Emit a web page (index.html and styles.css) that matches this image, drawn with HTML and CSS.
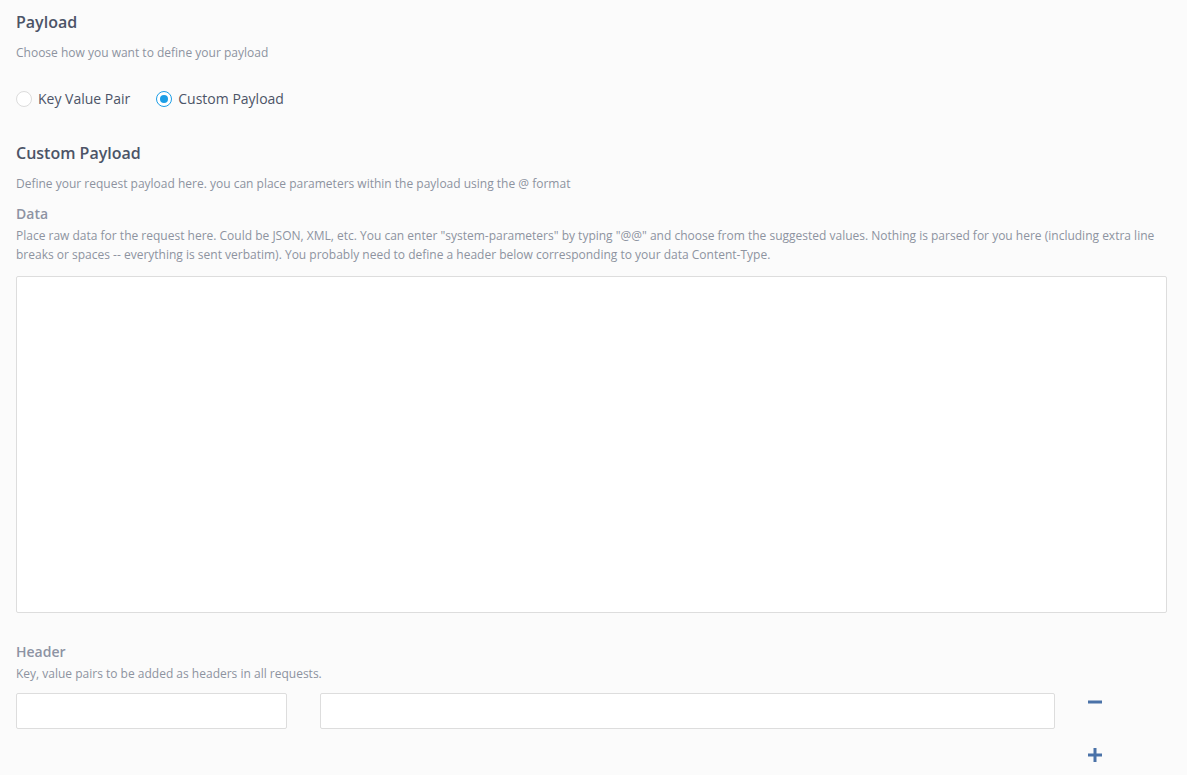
FILE: index.html
```html
<!DOCTYPE html>
<html lang="en">
<head>
    <meta charset="UTF-8">
    <meta name="viewport" content="width=device-width, initial-scale=1.0">
    <title>Payload</title>
    <link rel="stylesheet" href="styles.css">
</head>
<body>
    <div class="page">
        <h3 class="title">Payload</h3>
        <p class="hint">Choose how you want to define your payload</p>

        <div class="radios">
            <label class="radio">
                <input type="radio" name="mode" value="kv">
                <span class="dot"></span>
                Key Value Pair
            </label>
            <label class="radio">
                <input type="radio" name="mode" value="custom" checked>
                <span class="dot"></span>
                Custom Payload
            </label>
        </div>

        <h3 class="title title-2">Custom Payload</h3>
        <p class="hint">Define your request payload here. you can place parameters within the payload using the @ format</p>

        <label class="field-label" for="data">Data</label>
        <p class="field-hint">Place raw data for the request here. Could be JSON, XML, etc. You can enter "system-parameters" by typing "@@" and choose from the suggested values. Nothing is parsed for you here (including extra line breaks or spaces -- everything is sent verbatim). You probably need to define a header below corresponding to your data Content-Type.</p>
        <textarea id="data" class="data"></textarea>

        <label class="field-label header-label">Header</label>
        <p class="field-hint">Key, value pairs to be added as headers in all requests.</p>

        <div class="header-row">
            <input type="text" class="key">
            <input type="text" class="value">
            <div class="actions">
                <button class="icon-btn" title="Remove">
                    <svg width="14" height="14" viewBox="0 0 14 14"><rect x="0" y="5.5" width="14" height="3" fill="#4a72a8"/></svg>
                </button>
                <button class="icon-btn" title="Add">
                    <svg width="14" height="14" viewBox="0 0 14 14"><rect x="0" y="5.5" width="14" height="3" fill="#4a72a8"/><rect x="5.5" y="0" width="3" height="14" fill="#4a72a8"/></svg>
                </button>
            </div>
        </div>
    </div>
</body>
</html>
```

FILE: styles.css
```css
body {
    margin: 0;
    background: #fbfbfb;
    font-family: "Open Sans", sans-serif;
    color: #4c5467;
}

.page {
    padding: 10px 20px 0 16px;
}

.title {
    margin: 0;
    font-size: 16px;
    font-weight: 600;
    line-height: 24px;
    color: #4c5467;
}

.title-2 {
    margin-top: 33px;
}

.hint {
    margin: 10px 0 0;
    font-size: 12px;
    line-height: 18px;
    color: #8d93a0;
}

.radios {
    display: flex;
    gap: 26px;
    margin-top: 27px;
}

.radio {
    display: flex;
    align-items: center;
    gap: 6px;
    font-size: 14px;
    color: #4c5467;
    cursor: pointer;
}

.radio input {
    display: none;
}

.dot {
    width: 14px;
    height: 14px;
    border: 1px solid #dcdcdc;
    border-radius: 50%;
    background: #fff;
    box-sizing: content-box;
    position: relative;
}

.radio input:checked + .dot {
    border-color: #1c9ee6;
}

.radio input:checked + .dot::after {
    content: "";
    position: absolute;
    top: 3px;
    left: 3px;
    width: 8px;
    height: 8px;
    border-radius: 50%;
    background: #1c9ee6;
}

.field-label {
    display: block;
    margin-top: 11px;
    font-size: 14px;
    font-weight: 600;
    line-height: 20px;
    color: #8d93a3;
}

.header-label {
    margin-top: 29px;
}

.field-hint {
    margin: 2px 0 0;
    font-size: 12px;
    line-height: 19px;
    color: #8d93a0;
}

.data {
    display: block;
    width: 100%;
    height: 337px;
    margin-top: 12px;
    border: 1px solid #dddddd;
    border-radius: 2px;
    background: #fff;
    box-sizing: border-box;
    resize: none;
    outline: none;
}

.header-row {
    display: flex;
    align-items: flex-start;
    margin-top: 10px;
}

.header-row input {
    height: 36px;
    border: 1px solid #dddddd;
    border-radius: 2px;
    background: #fff;
    box-sizing: border-box;
    outline: none;
}

.key {
    width: 271px;
}

.value {
    width: 735px;
    margin-left: 33px;
}

.actions {
    display: flex;
    flex-direction: column;
    gap: 39px;
    margin-left: 33px;
    padding-top: 2px;
}

.icon-btn {
    border: none;
    background: none;
    padding: 0;
    width: 14px;
    height: 14px;
    cursor: pointer;
}

.icon-btn svg {
    display: block;
}
```
